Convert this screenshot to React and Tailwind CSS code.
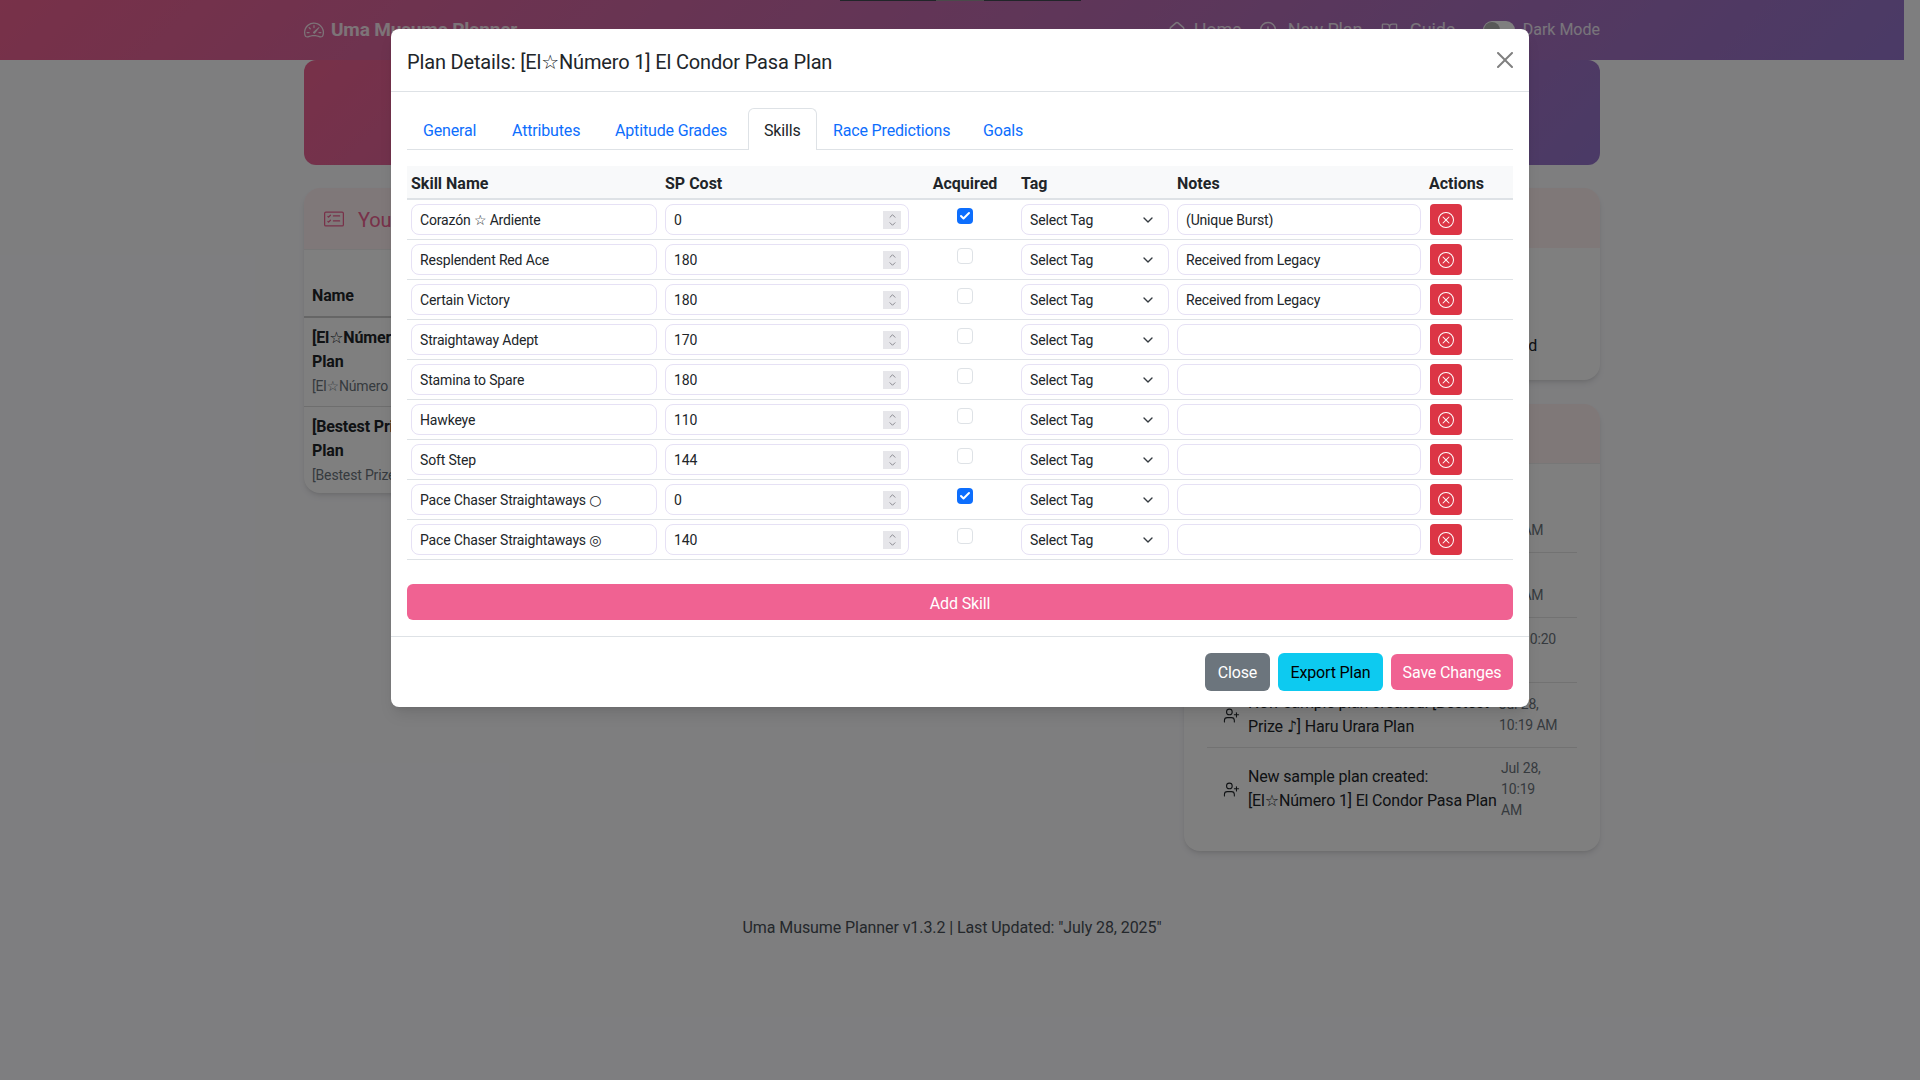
import { ChevronDown, ChevronUp, Check, House, CircleAlert, BookOpen, UserPlus } from 'lucide-react'

const skills = [
  { name: 'Corazón ☆ Ardiente', cost: 0, acquired: true, notes: '(Unique Burst)' },
  { name: 'Resplendent Red Ace', cost: 180, notes: 'Received from Legacy' },
  { name: 'Certain Victory', cost: 180, notes: 'Received from Legacy' },
  { name: 'Straightaway Adept', cost: 170, notes: '' },
  { name: 'Stamina to Spare', cost: 180, notes: '' },
  { name: 'Hawkeye', cost: 110, notes: '' },
  { name: 'Soft Step', cost: 144, notes: '' },
  { name: 'Pace Chaser Straightaways ○', cost: 0, acquired: true, notes: '' },
  { name: 'Pace Chaser Straightaways ◎', cost: 140, notes: '' },
]

const tabs = [
  { label: 'General', width: 'w-[89px]' },
  { label: 'Attributes', width: 'w-[103px]' },
  { label: 'Aptitude Grades', width: 'w-[149px]' },
  { label: 'Skills', width: 'w-[69px]' },
  { label: 'Race Predictions', width: 'w-[150px]' },
  { label: 'Goals', width: 'w-[80px]' },
]

const activity = [
  { lines: ['Plan updated: [Bestest Prize ♪]', 'Haru Urara Plan'], date: ['Jul 28,', '10:19 AM'], width: 'w-[237px]' },
  { lines: ['Plan updated: [El☆Número 1]', 'El Condor Pasa Plan'], date: ['Jul 28,', '10:19 AM'], width: 'w-[237px]' },
  { lines: ['Plan exported: [El☆Número 1]', 'El Condor Pasa Plan'], date: ['Jul 28, 10:20', 'AM'], width: 'w-[231px]' },
  { lines: ['New sample plan created: [Bestest', 'Prize ♪] Haru Urara Plan'], date: ['Jul 28,', '10:19 AM'], width: 'w-[251px]' },
  { lines: ['New sample plan created:', '[El☆Número 1] El Condor Pasa Plan'], date: ['Jul 28,', '10:19', 'AM'], width: 'w-[253px]', tall: true },
]

const fieldClass = 'block w-full h-[31px] rounded-lg border border-[#e6e1f5] bg-white px-2 text-sm text-[#212529] outline-none'

function XCircleIcon() {
  return (
    <svg width="16" height="16" viewBox="0 0 16 16" fill="currentColor">
      <path d="M8 15A7 7 0 1 1 8 1a7 7 0 0 1 0 14zm0 1A8 8 0 1 0 8 0a8 8 0 0 0 0 16z" />
      <path d="M4.646 4.646a.5.5 0 0 1 .708 0L8 7.293l2.646-2.647a.5.5 0 0 1 .708.708L8.707 8l2.647 2.646a.5.5 0 0 1-.708.708L8 8.707l-2.646 2.647a.5.5 0 0 1-.708-.708L7.293 8 4.646 5.354a.5.5 0 0 1 0-.708z" />
    </svg>
  )
}

function SkillRow({ skill }) {
  return (
    <tr className="border-b border-[#dee2e6]">
      <td className="p-1 align-top">
        <input className={fieldClass} defaultValue={skill.name} />
      </td>
      <td className="p-1 align-top">
        <div className="relative">
          <input
            type="number"
            className={`${fieldClass} [appearance:textfield] [&::-webkit-inner-spin-button]:appearance-none`}
            defaultValue={skill.cost}
          />
          <div className="absolute right-2 top-[7px] flex h-[18px] w-[18px] flex-col items-center justify-center bg-[#e6e6ea] text-[#77777e]">
            <ChevronUp size={11} strokeWidth={2} className="-mb-px" />
            <ChevronDown size={11} strokeWidth={2} className="-mt-px" />
          </div>
        </div>
      </td>
      <td className="px-1 pt-2 align-top">
        {skill.acquired ? (
          <div className="mx-auto flex h-4 w-4 items-center justify-center rounded bg-[#0d6efd]">
            <Check size={12} strokeWidth={4} className="text-white" />
          </div>
        ) : (
          <div className="mx-auto h-4 w-4 rounded border border-[#dee2e6] bg-white" />
        )}
      </td>
      <td className="p-1 align-top">
        <div className="relative">
          <select className={`${fieldClass} appearance-none`} defaultValue="">
            <option value="">Select Tag</option>
          </select>
          <ChevronDown size={16} strokeWidth={2} className="absolute right-[13px] top-[8px] text-[#343a40]" />
        </div>
      </td>
      <td className="p-1 align-top">
        <input className={fieldClass} defaultValue={skill.notes} />
      </td>
      <td className="p-1 pl-[5px] align-top">
        <button className="flex h-[31px] w-8 items-center justify-center rounded bg-[#dc3545] text-white">
          <XCircleIcon />
        </button>
      </td>
    </tr>
  )
}

function PlanModal() {
  return (
    <div className="absolute inset-0 flex justify-center bg-black/50 pt-[29px]">
      <div className="absolute left-[840px] top-0 flex h-px">
        <div className="w-24 bg-[#212529]" />
        <div className="w-12 bg-[#4a4a4a]" />
        <div className="w-[97px] bg-[#212529]" />
      </div>
      <div className="h-[678px] w-[1138px] rounded-lg bg-white text-[#212529] shadow-lg">
        <div className="flex h-[63px] items-center justify-between border-b border-[#dee2e6] px-4">
          <h5 className="pt-[3px] text-xl">Plan Details: [El☆Número 1] El Condor Pasa Plan</h5>
          <svg width="16" height="16" viewBox="0 0 16 16" fill="currentColor" className="text-[#808080]">
            <path d="M.293.293a1 1 0 011.414 0L8 6.586 14.293.293a1 1 0 111.414 1.414L9.414 8l6.293 6.293a1 1 0 01-1.414 1.414L8 9.414l-6.293 6.293a1 1 0 01-1.414-1.414L6.586 8 .293 1.707a1 1 0 010-1.414z" />
          </svg>
        </div>

        <div className="px-4 pt-4">
          <div className="flex h-[42px] border-b border-[#dee2e6]">
            {tabs.map((tab) =>
              tab.label === 'Skills' ? (
                <div key={tab.label} className={`${tab.width} h-[42px] rounded-t-md border border-b-0 border-[#dee2e6] bg-white pl-[15px] pt-[10px] text-[#212529]`}>
                  {tab.label}
                </div>
              ) : (
                <div key={tab.label} className={`${tab.width} h-[41px] pl-4 pt-[11px] text-[#0d6efd]`}>
                  {tab.label}
                </div>
              )
            )}
          </div>

          <table className="mt-4 w-full table-fixed">
            <colgroup>
              <col className="w-[254px]" />
              <col className="w-[252px]" />
              <col className="w-[104px]" />
              <col className="w-[156px]" />
              <col className="w-[252px]" />
              <col className="w-[88px]" />
            </colgroup>
            <thead className="tracking-normal">
              <tr className="border-b-2 border-[#dee2e6] bg-[#f8f9fa] font-bold">
                <th className="px-1 pb-[2px] pt-[6px] text-left">Skill Name</th>
                <th className="px-1 pb-[2px] pt-[6px] text-left">SP Cost</th>
                <th className="px-1 pb-[2px] pt-[6px] text-center">Acquired</th>
                <th className="px-1 pb-[2px] pt-[6px] text-left">Tag</th>
                <th className="px-1 pb-[2px] pt-[6px] text-left">Notes</th>
                <th className="px-1 pb-[2px] pt-[6px] text-left">Actions</th>
              </tr>
            </thead>
            <tbody>
              {skills.map((skill) => (
                <SkillRow key={skill.name} skill={skill} />
              ))}
            </tbody>
          </table>

          <button className="mt-6 h-9 w-full rounded-md bg-[#f06292] pt-[3px] text-white">Add Skill</button>
        </div>

        <div className="mt-4 flex items-center justify-end gap-2 border-t border-[#dee2e6] px-4 pt-4">
          <button className="h-[38px] w-[65px] rounded-md bg-[#6c757d] pt-[2px] text-white">Close</button>
          <button className="h-[38px] w-[105px] rounded-md bg-[#0dcaf0] pt-[2px] text-black">Export Plan</button>
          <button className="h-9 w-[122px] rounded-md bg-[#f06292] pt-[2px] text-white">Save Changes</button>
        </div>
      </div>
    </div>
  )
}

function Navbar() {
  return (
    <nav className="h-[60px] bg-[linear-gradient(135deg,#f06292,#9575cd)] text-white/85">
      <div className="mx-auto flex h-full w-[1296px] items-center justify-between">
        <div className="flex items-center gap-[7px] text-[19px] font-bold">
          <svg width="20" height="20" viewBox="0 0 16 16" fill="currentColor">
            <path d="M8 4a.5.5 0 0 1 .5.5V6a.5.5 0 0 1-1 0V4.5A.5.5 0 0 1 8 4zM3.732 5.732a.5.5 0 0 1 .707 0l.915.914a.5.5 0 1 1-.708.708l-.914-.915a.5.5 0 0 1 0-.707zM2 10a.5.5 0 0 1 .5-.5h1.586a.5.5 0 0 1 0 1H2.5A.5.5 0 0 1 2 10zm9.5 0a.5.5 0 0 1 .5-.5h1.5a.5.5 0 0 1 0 1H12a.5.5 0 0 1-.5-.5zm.754-4.246a.389.389 0 0 0-.527-.02L7.547 9.31a.91.91 0 1 0 1.302 1.258l3.434-4.297a.389.389 0 0 0-.029-.518z" />
            <path d="M0 10a8 8 0 1 1 15.547 2.661c-.442 1.253-1.845 1.602-2.932 1.25C11.309 13.488 9.475 13 8 13c-1.474 0-3.31.488-4.615.911-1.087.352-2.49.003-2.932-1.25A7.988 7.988 0 0 1 0 10zm8-7a7 7 0 0 0-6.603 9.329c.203.575.923.876 1.68.63C4.397 12.533 6.358 12 8 12s3.604.532 4.923.96c.757.245 1.477-.056 1.68-.631A7 7 0 0 0 8 3z" />
          </svg>
          <span className="pt-px">Uma Musume Planner</span>
        </div>
        <div className="flex items-center text-lg">
          <span className="flex w-[91px] items-center gap-2"><House size={18} />Home</span>
          <span className="flex w-[122px] items-center gap-[11px]"><CircleAlert size={18} />New Plan</span>
          <span className="flex w-[102px] items-center gap-3"><BookOpen size={17} />Guide</span>
          <span className="flex items-center gap-2 text-base tracking-normal">
            <span className="flex h-[18px] w-8 items-center rounded-full bg-white pl-px">
              <span className="h-4 w-4 rounded-full bg-[#b0b0b0]" />
            </span>
            Dark Mode
          </span>
        </div>
      </div>
    </nav>
  )
}

function PlansCard() {
  return (
    <div className="h-[305px] w-[856px] rounded-2xl bg-white shadow-md">
      <div className="flex h-[62px] items-center gap-[14px] rounded-t-2xl border-b border-[#eee] bg-[#fff0f3] px-5 text-xl text-[#f06292]">
        <svg width="20" height="20" viewBox="0 0 16 16" fill="currentColor">
          <path d="M14.5 3a.5.5 0 0 1 .5.5v9a.5.5 0 0 1-.5.5h-13a.5.5 0 0 1-.5-.5v-9a.5.5 0 0 1 .5-.5h13zm-13-1A1.5 1.5 0 0 0 0 3.5v9A1.5 1.5 0 0 0 1.5 14h13a1.5 1.5 0 0 0 1.5-1.5v-9A1.5 1.5 0 0 0 14.5 2h-13z" />
          <path d="M7 5.5a.5.5 0 0 1 .5-.5h5a.5.5 0 0 1 0 1h-5a.5.5 0 0 1-.5-.5zm-1.496-.854a.5.5 0 0 1 0 .708l-1.5 1.5a.5.5 0 0 1-.708 0l-.5-.5a.5.5 0 1 1 .708-.708l.146.147 1.146-1.147a.5.5 0 0 1 .708 0zM7 9.5a.5.5 0 0 1 .5-.5h5a.5.5 0 0 1 0 1h-5a.5.5 0 0 1-.5-.5zm-1.496-.854a.5.5 0 0 1 0 .708l-1.5 1.5a.5.5 0 0 1-.708 0l-.5-.5a.5.5 0 0 1 .708-.708l.146.147 1.146-1.147a.5.5 0 0 1 .708 0z" />
        </svg>
        <span className="pt-[3px]">Your Plans</span>
      </div>
      <table className="mt-[26px] w-full text-left">
        <thead>
          <tr className="border-b-2 border-[#ccc]">
            <th className="px-2 py-2">Name</th>
          </tr>
        </thead>
        <tbody>
          <tr className="border-b border-[#ddd]">
            <td className="px-2 pb-[10px] pt-2">
              <div className="font-bold">[El☆Número 1] El Condor Pasa</div>
              <div className="font-bold">Plan</div>
              <div className="mt-[2px] text-sm text-[#6c757d]">[El☆Número 1] El Condor Pasa</div>
            </td>
          </tr>
          <tr>
            <td className="px-2 pb-[10px] pt-2">
              <div className="font-bold">[Bestest Prize ♪] Haru Urara</div>
              <div className="font-bold">Plan</div>
              <div className="mt-[2px] text-sm text-[#6c757d]">[Bestest Prize ♪] Haru Urara</div>
            </td>
          </tr>
        </tbody>
      </table>
    </div>
  )
}

function SideCards() {
  return (
    <div className="flex w-[416px] flex-col gap-6">
      <div className="h-[192px] rounded-2xl bg-white shadow-md">
        <div className="h-[60px] rounded-t-2xl bg-[#fff0f0]" />
        <p className="pr-[63px] pt-[86px] text-right">Plans Completed</p>
      </div>
      <div className="h-[447px] rounded-2xl bg-white shadow-md">
        <div className="h-[60px] rounded-t-2xl border-b border-[#eee] bg-[#fff0f0]" />
        <ul className="mx-[23px] pt-[24px] text-[#212529]">
          {activity.map((item) => (
            <li
              key={item.lines.join()}
              className={item.tall ? 'flex h-[82px] items-center pl-4' : 'flex h-[65px] items-center border-b border-[#e5e5e5] pl-4'}
            >
              <UserPlus size={17} strokeWidth={1.5} className="mr-2 shrink-0" />
              <span className={`${item.width} shrink-0 whitespace-nowrap`}>
                {item.lines.map((line) => (
                  <span key={line} className="block">{line}</span>
                ))}
              </span>
              <span className="whitespace-nowrap text-sm leading-[21px] text-[#6c757d]">
                {item.date.map((line) => (
                  <span key={line} className="block">{line}</span>
                ))}
              </span>
            </li>
          ))}
        </ul>
      </div>
    </div>
  )
}

export default function App() {
  return (
    <div className="relative h-[1080px] overflow-hidden bg-[#fcfcff] font-['Roboto','DejaVu_Sans',sans-serif] tracking-[-0.01em] text-[#212529]">
      <div className="w-[1904px]">
        <Navbar />
        <div className="mx-auto w-[1296px]">
          <div className="h-[105px] rounded-xl bg-[linear-gradient(135deg,#f06292,#9575cd)]" />
          <div className="mt-[23px] flex gap-6">
            <PlansCard />
            <SideCards />
          </div>
          <div className="mt-[65px] text-center tracking-[-0.005em] text-[#495057]">
            Uma Musume Planner v1.3.2 | Last Updated: "July 28, 2025"
          </div>
        </div>
      </div>
      <PlanModal />
    </div>
  )
}
